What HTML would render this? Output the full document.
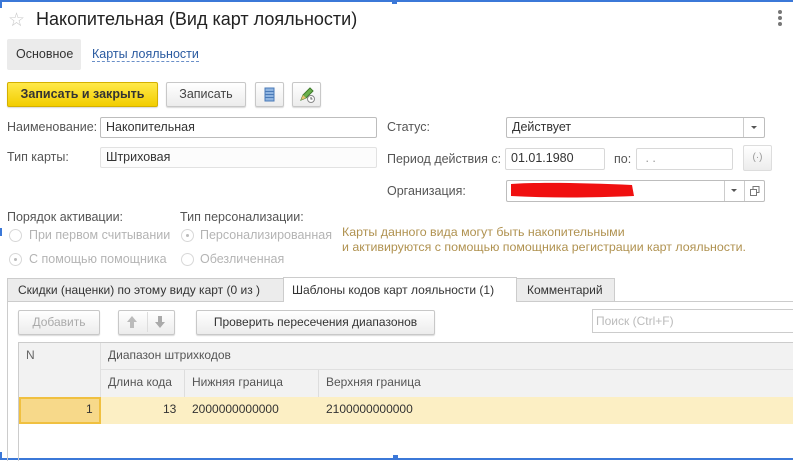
<!DOCTYPE html>
<html><head><meta charset="utf-8"><style>
*{box-sizing:border-box;margin:0;padding:0}
body{width:793px;height:461px;overflow:hidden;background:#fff;position:relative;font-family:"Liberation Sans",Arial,sans-serif;font-size:12.5px;color:#333}
.a{position:absolute;white-space:nowrap}
.inp{position:absolute;border:1px solid #bdbdbd;border-radius:2px;background:#fff;padding-left:5px;line-height:19px;font-size:12.5px;color:#333}
.btn{position:absolute;border:1px solid #c8c8c8;border-radius:2px;background:linear-gradient(#fff,#ececec);box-shadow:0 1px 1px rgba(0,0,0,.15);text-align:center;color:#444}
.lbl{position:absolute;color:#555;white-space:nowrap}
.rad{position:absolute;width:13px;height:13px;border:1px solid #d8d8d8;border-radius:50%;background:#fff}
.rad.on::after{content:"";position:absolute;left:4px;top:4px;width:3px;height:3px;border-radius:50%;background:#bbb}
.rt{position:absolute;color:#b4b4b4;white-space:nowrap}
.s{font-size:12px}
</style></head><body>
<div class="a" style="left:0;top:0;width:793px;height:2px;background:#3b78d8"></div>
<div class="a" style="left:0;top:458px;width:793px;height:2px;background:#3b78d8"></div>
<div class="a" style="left:0;top:0;width:2px;height:8px;background:#3b78d8"></div>
<div class="a" style="left:0;top:228px;width:2px;height:8px;background:#3b78d8"></div>
<div class="a" style="left:0;top:452px;width:2px;height:8px;background:#3b78d8"></div>
<div class="a" style="left:392px;top:0;width:5px;height:4px;background:#3b78d8"></div>
<div class="a" style="left:393px;top:455px;width:5px;height:5px;background:#3b78d8"></div>

<div class="a" style="left:8px;top:9px;font-size:19px;color:#c8c8c8">☆</div>
<div class="a" style="left:36px;top:9px;font-size:18px;color:#222">Накопительная (Вид карт лояльности)</div>
<div class="a" style="left:778px;top:10px;width:4px;height:4px;border-radius:50%;background:#777;box-shadow:0 6px 0 #777,0 12px 0 #777"></div>

<div class="a" style="left:7px;top:39px;width:74px;height:31px;background:#ebebeb;border-radius:2px"></div>
<div class="a" style="left:16px;top:47px;color:#333">Основное</div>
<div class="a" style="left:92px;top:47px;color:#2a5aa0;border-bottom:1px dashed #6a8fc8;line-height:14px">Карты лояльности</div>

<div class="btn" style="left:7px;top:82px;width:151px;height:25px;background:linear-gradient(#ffe94a,#f2cd00);border-color:#d4b000;font-weight:bold;color:#333;line-height:23px">Записать и закрыть</div>
<div class="btn" style="left:166px;top:82px;width:80px;height:25px;line-height:23px">Записать</div>
<div class="btn" style="left:255px;top:82px;width:29px;height:25px">
<svg width="27" height="23" viewBox="0 0 27 23"><rect x="9" y="5" width="9" height="13" fill="#8fb4e0" stroke="#4a7ab8"/><path d="M9 8.5h9M9 11.5h9M9 14.5h9" stroke="#4a7ab8"/></svg></div>
<div class="btn" style="left:292px;top:82px;width:29px;height:25px">
<svg width="27" height="23" viewBox="0 0 27 23"><path d="M8 17l2-5 7-7 3 3-7 7z" fill="#6ab04c" stroke="#3d7a2a"/><path d="M8 17l2-5 3 3z" fill="#e8c070"/><circle cx="18" cy="16" r="3.5" fill="#fff" stroke="#888"/><path d="M18 14v2h1.5" stroke="#666" fill="none"/></svg></div>

<div class="lbl" style="left:7px;top:120px">Наименование:</div>
<div class="inp" style="left:100px;top:117px;width:277px;height:21px">Накопительная</div>
<div class="lbl" style="left:7px;top:150px">Тип карты:</div>
<div class="inp" style="left:100px;top:147px;width:277px;height:21px;border-color:#e2e2e2;background:#fcfcfc">Штриховая</div>

<div class="lbl" style="left:387px;top:120px">Статус:</div>
<div class="inp" style="left:506px;top:117px;width:259px;height:21px">Действует</div>
<div class="a" style="left:743px;top:118px;width:1px;height:19px;background:#ccc"></div>
<div class="a" style="left:751px;top:126px;border:3px solid transparent;border-top:3px solid #555;border-bottom:0"></div>

<div class="lbl" style="left:387px;top:152px">Период действия с:</div>
<div class="inp" style="left:505px;top:148px;width:100px;height:22px;border-color:#d8d8d8">01.01.1980</div>
<div class="lbl" style="left:614px;top:152px">по:</div>
<div class="inp" style="left:636px;top:148px;width:97px;height:22px;border-color:#d8d8d8;color:#999">&nbsp;. .</div>
<div class="btn" style="left:743px;top:145px;width:29px;height:26px;color:#999;font-size:10px;line-height:24px;box-shadow:none;border-color:#ddd">(·)</div>

<div class="lbl" style="left:387px;top:184px">Организация:</div>
<div class="inp" style="left:506px;top:180px;width:259px;height:22px"></div>
<svg class="a" style="left:508px;top:181px" width="128" height="18" viewBox="0 0 128 18"><path d="M3 3 C30 1,80 2,124 4 L126 15 C80 17,40 17,3 15 Z" fill="#f01010"/></svg>
<div class="a" style="left:724px;top:181px;width:1px;height:20px;background:#ccc"></div>
<div class="a" style="left:731px;top:189px;border:3px solid transparent;border-top:3px solid #555;border-bottom:0"></div>
<div class="a" style="left:744px;top:181px;width:1px;height:20px;background:#ccc"></div>
<svg class="a" style="left:749px;top:185px" width="12" height="12" viewBox="0 0 12 12"><rect x="4" y="1.5" width="6" height="6" fill="none" stroke="#777"/><rect x="1.5" y="4.5" width="6" height="6" fill="#fff" stroke="#777"/></svg>

<div class="lbl" style="left:7px;top:210px">Порядок активации:</div>
<div class="lbl" style="left:180px;top:210px">Тип персонализации:</div>
<div class="rad" style="left:9px;top:229px"></div><div class="rt" style="left:29px;top:228px">При первом считывании</div>
<div class="rad on" style="left:9px;top:253px"></div><div class="rt" style="left:29px;top:252px">С помощью помощника</div>
<div class="rad on" style="left:181px;top:229px"></div><div class="rt" style="left:200px;top:228px">Персонализированная</div>
<div class="rad" style="left:181px;top:253px"></div><div class="rt" style="left:200px;top:252px">Обезличенная</div>
<div class="a" style="left:342px;top:225px;color:#b09250;font-size:12.4px;line-height:15px">Карты данного вида могут быть накопительными<br>и активируются с помощью помощника регистрации карт лояльности.</div>

<div class="a s" style="left:7px;top:278px;width:277px;height:23px;background:#ececec;border:1px solid #ccc;border-bottom:none;line-height:22px;padding-left:10px;color:#333">Скидки (наценки) по этому виду карт (0 из )</div>
<div class="a s" style="left:283px;top:277px;width:234px;height:25px;background:#fff;border:1px solid #ccc;border-bottom:none;line-height:24px;padding-left:8px;color:#333">Шаблоны кодов карт лояльности (1)</div>
<div class="a s" style="left:516px;top:278px;width:99px;height:23px;background:#ececec;border:1px solid #ccc;border-bottom:none;line-height:22px;padding-left:10px;color:#333">Комментарий</div>
<div class="a" style="left:7px;top:301px;width:276px;height:1px;background:#ccc"></div>
<div class="a" style="left:516px;top:301px;width:277px;height:1px;background:#ccc"></div>
<div class="a" style="left:7px;top:301px;width:1px;height:160px;background:#ccc"></div>

<div class="btn s" style="left:18px;top:310px;width:82px;height:25px;line-height:23px;color:#aaa">Добавить</div>
<div class="btn" style="left:118px;top:310px;width:57px;height:25px"></div>
<div class="a" style="left:147px;top:312px;width:1px;height:20px;background:#ddd"></div>
<svg class="a" style="left:126px;top:315px" width="12" height="14" viewBox="0 0 12 14"><path d="M6 1L1 7h3v6h4V7h3z" fill="#bbb"/></svg>
<svg class="a" style="left:154px;top:315px" width="12" height="14" viewBox="0 0 12 14"><path d="M6 13L1 7h3V1h4v6h3z" fill="#aaa"/></svg>
<div class="btn s" style="left:196px;top:310px;width:239px;height:25px;line-height:23px;color:#333">Проверить пересечения диапазонов</div>
<div class="a s" style="left:592px;top:309px;width:201px;height:24px;border:1px solid #ccc;border-right:none;line-height:22px;padding-left:3px;color:#bbb">Поиск (Ctrl+F)</div>

<div class="a" style="left:18px;top:342px;width:775px;height:119px;border-left:1px solid #ccc;border-top:1px solid #ccc"></div>
<div class="a" style="left:19px;top:343px;width:774px;height:54px;background:#f2f2f2"></div>
<div class="a" style="left:100px;top:343px;width:1px;height:54px;background:#e0e0e0"></div>
<div class="a" style="left:101px;top:369px;width:692px;height:1px;background:#e0e0e0"></div>
<div class="a" style="left:184px;top:370px;width:1px;height:27px;background:#ddd"></div>
<div class="a" style="left:318px;top:370px;width:1px;height:27px;background:#ddd"></div>
<div class="a s" style="left:26px;top:348px;color:#666">N</div>
<div class="a s" style="left:108px;top:348px;color:#555">Диапазон штрихкодов</div>
<div class="a s" style="left:108px;top:375px;color:#555">Длина кода</div>
<div class="a s" style="left:192px;top:375px;color:#555">Нижняя граница</div>
<div class="a s" style="left:326px;top:375px;color:#555">Верхняя граница</div>
<div class="a" style="left:19px;top:397px;width:774px;height:27px;background:#fcefc4"></div>
<div class="a" style="left:19px;top:397px;width:82px;height:27px;background:#f7d98a;border:2px solid #f0c040"></div>
<div class="a s" style="left:86px;top:402px;color:#333">1</div>
<div class="a s" style="left:163px;top:402px;color:#333">13</div>
<div class="a s" style="left:192px;top:402px;color:#333">2000000000000</div>
<div class="a s" style="left:326px;top:402px;color:#333">2100000000000</div>
</body></html>
